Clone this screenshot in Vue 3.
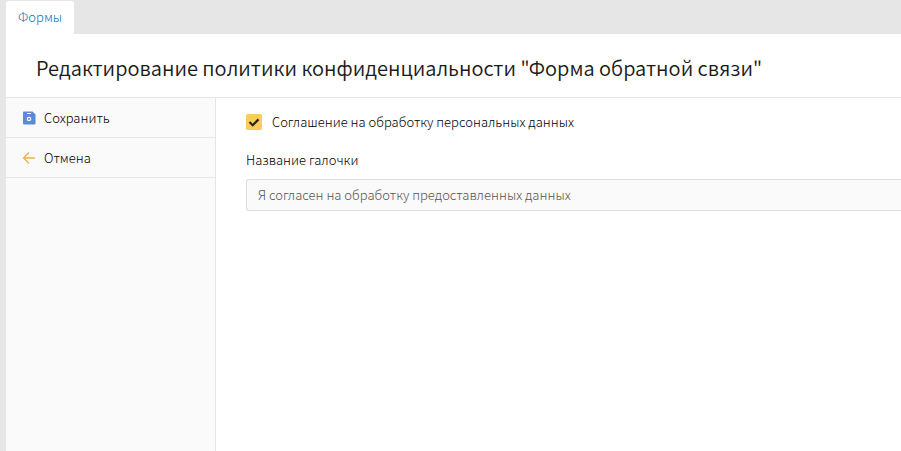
<script setup>
import { ref } from 'vue'

const agreed = ref(true)
const caption = ref('')
</script>

<template>
  <div class="app">
    <nav class="tabs">
      <a class="tab" href="#forms">Формы</a>
    </nav>
    <div class="window">
      <header class="header">
        <h1>Редактирование политики конфиденциальности "Форма обратной связи"</h1>
      </header>
      <div class="body">
        <aside class="actions">
          <button type="button" class="action">
            <svg width="14" height="14" viewBox="0 0 14 14" aria-hidden="true">
              <path fill="#5b8bd6" d="M2 .5H10.500L13.500 3.500V12.500Q13.500 13.500 12.500 13.500H2Q1 13.500 1 12.500V1.500Q1 .5 2 .5z" />
              <path fill="#fff" d="M5 2h4v1H5z" />
              <circle cx="7" cy="8" r="1.700" fill="none" stroke="#fff" stroke-width="1.200" />
            </svg>
            <span>Сохранить</span>
          </button>
          <button type="button" class="action">
            <svg width="14" height="14" viewBox="0 0 14 14" aria-hidden="true">
              <path fill="none" stroke="#eab257" stroke-width="1.300" d="M13 7H1.500M7 1.500L1.500 7 7 12.500" />
            </svg>
            <span>Отмена</span>
          </button>
        </aside>
        <main class="content">
          <label class="check">
            <input v-model="agreed" type="checkbox" />
            <svg class="mark" width="16" height="16" viewBox="0 0 16 16" aria-hidden="true">
              <rect width="16" height="16" rx="2" fill="#f9cd5c" />
              <path v-if="agreed" fill="none" stroke="#2b2412" stroke-width="2.200" d="M3.500 8l3.200 3.200 5.800-5.800" />
            </svg>
            <span>Соглашение на обработку персональных данных</span>
          </label>
          <label class="caption" for="caption">Название галочки</label>
          <input
            id="caption"
            v-model="caption"
            class="field"
            type="text"
            placeholder="Я согласен на обработку предоставленных данных"
          />
        </main>
      </div>
    </div>
  </div>
</template>

<style>
body {
  margin: 0;
}
</style>

<style scoped>
.app {
  display: flex;
  flex-direction: column;
  min-height: 100vh;
  box-sizing: border-box;
  padding-left: 6px;
  background: #e6e6e6;
  color: #000;
  font: 300 13px/20px "Noto Sans CJK SC", "Noto Sans", sans-serif;
}
.tabs {
  display: flex;
  padding-top: 1px;
}
.tab {
  padding: 6px 12px 7px;
  border-radius: 3px 3px 0 0;
  background: #fff;
  color: #1672b4;
  text-decoration: none;
}
.window {
  flex: 1;
  display: flex;
  flex-direction: column;
  background: #fff;
}
.header {
  padding: 20px 30px 15px;
  border-bottom: 1px solid #e6e6e6;
}
h1 {
  margin: 0;
  color: #1a1a1a;
  font-size: 20px;
  line-height: 28px;
  font-weight: 350;
  white-space: nowrap;
}
.body {
  flex: 1;
  display: flex;
}
.actions {
  flex: 0 0 209px;
  border-right: 1px solid #e6e6e6;
  background: #fafafa;
}
.action {
  display: flex;
  align-items: center;
  gap: 8px;
  width: 100%;
  height: 40px;
  padding: 0 16px;
  border: 0;
  border-bottom: 1px solid #e6e6e6;
  background: none;
  color: inherit;
  font: inherit;
}
.content {
  flex: 1;
  min-width: 0;
  padding: 14px 0 0 30px;
}
.check {
  display: flex;
  align-items: center;
  gap: 10px;
  position: relative;
  white-space: nowrap;
}
.check input {
  position: absolute;
  width: 16px;
  height: 16px;
  margin: 0;
  opacity: 0;
}
.caption {
  display: block;
  margin: 18px 0 9px;
}
.field {
  display: block;
  box-sizing: border-box;
  width: 100%;
  height: 32px;
  padding: 0 11px 1px;
  border: 1px solid #ddd;
  border-right: 0;
  border-radius: 3px 0 0 3px;
  background: #fafafa;
  color: inherit;
  font: inherit;
}
.field::placeholder {
  color: #555;
  opacity: 1;
}
</style>
